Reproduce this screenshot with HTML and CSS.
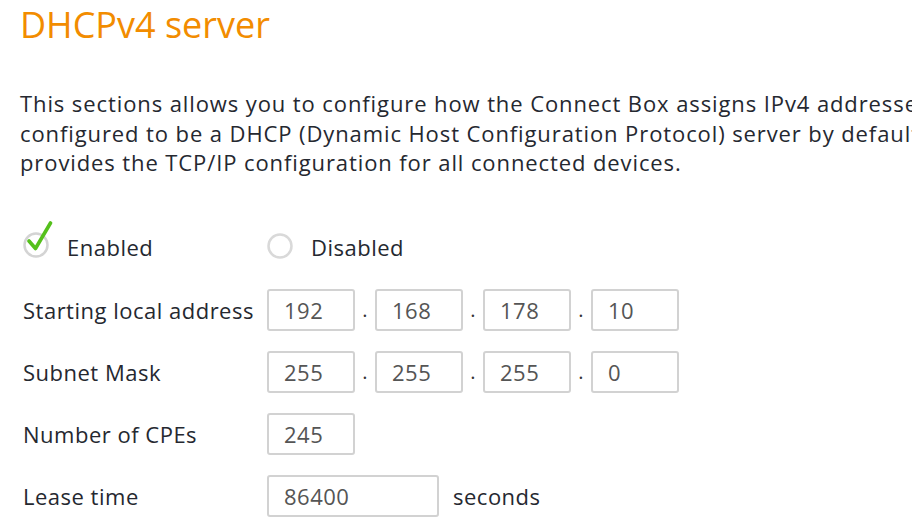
FILE: index.html
```html
<!DOCTYPE html>
<html>
<head>
<meta charset="utf-8">
<link rel="stylesheet" href="styles.css">
</head>
<body>
<div class="page">
  <h1 class="title">DHCPv4 server</h1>
  <p class="intro">This sections allows you to configure how the Connect Box assigns IPv4 addresses to the connected devices. The Connect Box is<br>configured to be a DHCP (Dynamic Host Configuration Protocol) server by default, which means it automatically<br>provides the TCP/IP configuration for all connected devices.</p>

  <div class="mode">
    <label class="opt">
      <span class="radio checked">
        <svg width="34" height="40" viewBox="0 0 34 40">
          <circle cx="13" cy="24" r="11.5" fill="none" stroke="#d4d4d4" stroke-width="2.5"/>
          <path d="M6 20 L12.5 27.5 L27.5 2" fill="none" stroke="#55c01c" stroke-width="3.6" stroke-linecap="round" stroke-linejoin="round"/>
        </svg>
      </span>
      <span class="opt-text">Enabled</span>
    </label>
    <label class="opt">
      <span class="radio">
        <svg width="28" height="28" viewBox="0 0 28 28">
          <circle cx="13" cy="13" r="11.5" fill="none" stroke="#d9d9d9" stroke-width="2.5"/>
        </svg>
      </span>
      <span class="opt-text">Disabled</span>
    </label>
  </div>

  <div class="form">
    <div class="row">
      <span class="label">Starting local address</span>
      <div class="fields">
        <input class="box" value="192"><span class="dot">.</span><input class="box" value="168"><span class="dot">.</span><input class="box" value="178"><span class="dot">.</span><input class="box" value="10">
      </div>
    </div>
    <div class="row">
      <span class="label">Subnet Mask</span>
      <div class="fields">
        <input class="box" value="255"><span class="dot">.</span><input class="box" value="255"><span class="dot">.</span><input class="box" value="255"><span class="dot">.</span><input class="box" value="0">
      </div>
    </div>
    <div class="row">
      <span class="label">Number of CPEs</span>
      <div class="fields">
        <input class="box" value="245">
      </div>
    </div>
    <div class="row">
      <span class="label">Lease time</span>
      <div class="fields">
        <input class="box wide" value="86400"><span class="unit">seconds</span>
      </div>
    </div>
  </div>
</div>
</body>
</html>
```

FILE: styles.css
```css
html, body {
  margin: 0;
  padding: 0;
  background: #ffffff;
  overflow: hidden;
}
.page {
  padding-left: 20px;
  font-family: "Open Sans", "Lato", sans-serif;
  color: #252830;
  white-space: nowrap;
}
.title {
  margin: 0;
  padding-top: 1px;
  font-size: 36px;
  line-height: 48px;
  font-weight: 400;
  color: #f28c00;
}
.intro {
  margin: 40px 0 0 0;
  font-size: 22px;
  line-height: 29.5px;
  letter-spacing: 0.9px;
}
.mode {
  display: flex;
  margin-top: 49px;
  height: 40px;
  align-items: center;
}
.opt {
  display: flex;
  align-items: center;
}
.opt:first-child {
  width: 244px;
}
.radio {
  display: flex;
  margin-left: 3px;
  width: 44px;
}
.radio.checked svg {
  margin-top: -12px;
}
.opt-text {
  font-size: 22px;
  letter-spacing: 0.5px;
}
.form {
  margin-top: 22px;
  padding-left: 3px;
  display: flex;
  flex-direction: column;
  gap: 20px;
}
.row {
  display: flex;
  align-items: center;
  height: 42px;
}
.label {
  width: 244px;
  font-size: 22px;
  letter-spacing: 0.5px;
}
.fields {
  display: flex;
  align-items: center;
}
.box {
  box-sizing: border-box;
  width: 88px;
  height: 42px;
  border: 2px solid #d2d2d2;
  border-radius: 3px;
  padding: 0 0 0 15px;
  font-family: "Open Sans", "Lato", sans-serif;
  font-size: 22px;
  letter-spacing: 0.5px;
  color: #555555;
  background: #fff;
  outline: none;
}
.box.wide {
  width: 172px;
}
.dot {
  width: 20px;
  text-align: center;
  font-size: 20px;
  color: #333;
}
.unit {
  margin-left: 14px;
  font-size: 22px;
  letter-spacing: 0.5px;
}
```
